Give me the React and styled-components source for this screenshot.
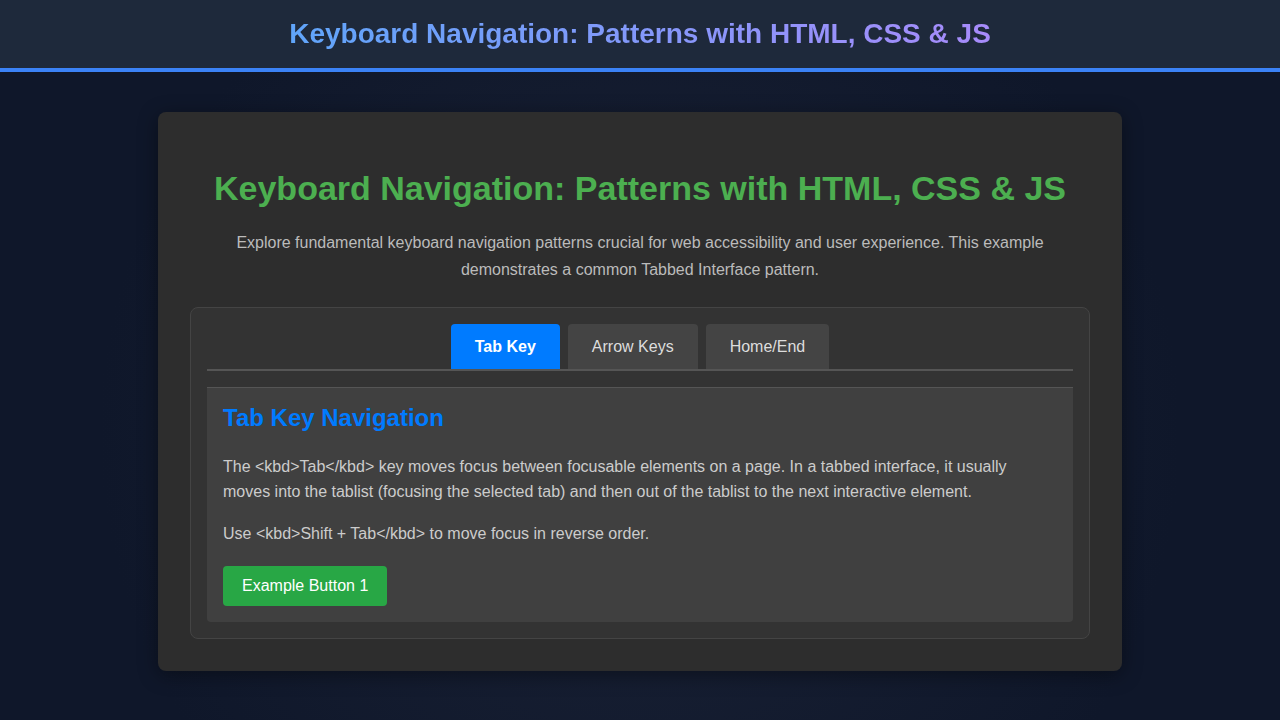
import React, { useState } from "react";
import styled, { createGlobalStyle } from "styled-components";

const Global = createGlobalStyle`
  html, body { margin: 0; padding: 0; }
  body {
    font-family: "Liberation Sans", Arial, sans-serif;
    background: radial-gradient(circle at 50% 60%, #1a2236 0%, #0f172a 70%);
    background-color: #0f172a;
    min-height: 720px;
  }
`;

const Header = styled.header`
  background: #1e293b;
  height: 68px;
  border-bottom: 4px solid #3b82f6;
  display: flex;
  align-items: center;
  justify-content: center;
`;
const HeaderTitle = styled.div`
  font-size: 28px;
  font-weight: bold;
  background: linear-gradient(90deg, #60a5fa, #a78bfa);
  -webkit-background-clip: text;
  background-clip: text;
  color: transparent;
`;
const Main = styled.main`
  display: flex;
  justify-content: center;
  padding-top: 40px;
`;
const Card = styled.section`
  width: 964px;
  box-sizing: border-box;
  background: #2d2d2d;
  border-radius: 8px;
  padding: 32px 32px 32px;
  box-shadow: 0 4px 20px rgba(0,0,0,0.4);
`;
const H1 = styled.h1`
  margin: 21px 0 0;
  text-align: center;
  color: #4caf50;
  font-size: 34px;
  line-height: 46px;
`;
const Intro = styled.p`
  margin: 18px auto 24px;
  max-width: 820px;
  text-align: center;
  color: #bbb;
  font-size: 16px;
  line-height: 27px;
`;
const Tabs = styled.div`
  background: #333;
  border: 1px solid #444;
  border-radius: 8px;
  padding: 16px 16px 16px;
`;
const TabList = styled.div`
  display: flex;
  justify-content: center;
  gap: 8px;
  border-bottom: 2px solid #555;
`;
const Tab = styled.button`
  font-family: inherit;
  font-size: 16px;
  font-weight: ${p => (p.$active ? "bold" : "normal")};
  border: none;
  border-radius: 4px 4px 0 0;
  height: 45px;
  padding: 0 24px;
  background: ${p => (p.$active ? "#007bff" : "#444")};
  color: ${p => (p.$active ? "#fff" : "#ddd")};
  cursor: pointer;
`;
const Panel = styled.div`
  margin-top: 16px;
  background: #404040;
  border-top: 1px solid #555;
  border-radius: 0 0 4px 4px;
  padding: 16px 16px 16px;
`;
const H2 = styled.h2`
  margin: 0 0 22px;
  color: #007bff;
  font-size: 24px;
  line-height: 28px;
`;
const Text = styled.p`
  margin: 0 0 17px;
  color: #ccc;
  font-size: 16px;
  line-height: 25px;
`;
const Btn = styled.button`
  margin-top: 3px;
  font-family: inherit;
  font-size: 16px;
  background: #28a745;
  color: #fff;
  border: none;
  border-radius: 4px;
  height: 40px;
  padding: 0 19px;
`;

export default function App() {
  const [tab, setTab] = useState(0);
  const tabs = ["Tab Key", "Arrow Keys", "Home/End"];
  return (
    <>
      <Global />
      <Header><HeaderTitle>Keyboard Navigation: Patterns with HTML, CSS &amp; JS</HeaderTitle></Header>
      <Main>
        <Card>
          <H1>Keyboard Navigation: Patterns with HTML, CSS &amp; JS</H1>
          <Intro>Explore fundamental keyboard navigation patterns crucial for web accessibility and user experience. This example demonstrates a common Tabbed Interface pattern.</Intro>
          <Tabs>
            <TabList>
              {tabs.map((t, i) => (
                <Tab key={t} $active={i === tab} onClick={() => setTab(i)}>{t}</Tab>
              ))}
            </TabList>
            <Panel>
              <H2>Tab Key Navigation</H2>
              <Text>The &lt;kbd&gt;Tab&lt;/kbd&gt; key moves focus between focusable elements on a page. In a tabbed interface, it usually moves into the tablist (focusing the selected tab) and then out of the tablist to the next interactive element.</Text>
              <Text>Use &lt;kbd&gt;Shift + Tab&lt;/kbd&gt; to move focus in reverse order.</Text>
              <Btn>Example Button 1</Btn>
            </Panel>
          </Tabs>
        </Card>
      </Main>
    </>
  );
}
